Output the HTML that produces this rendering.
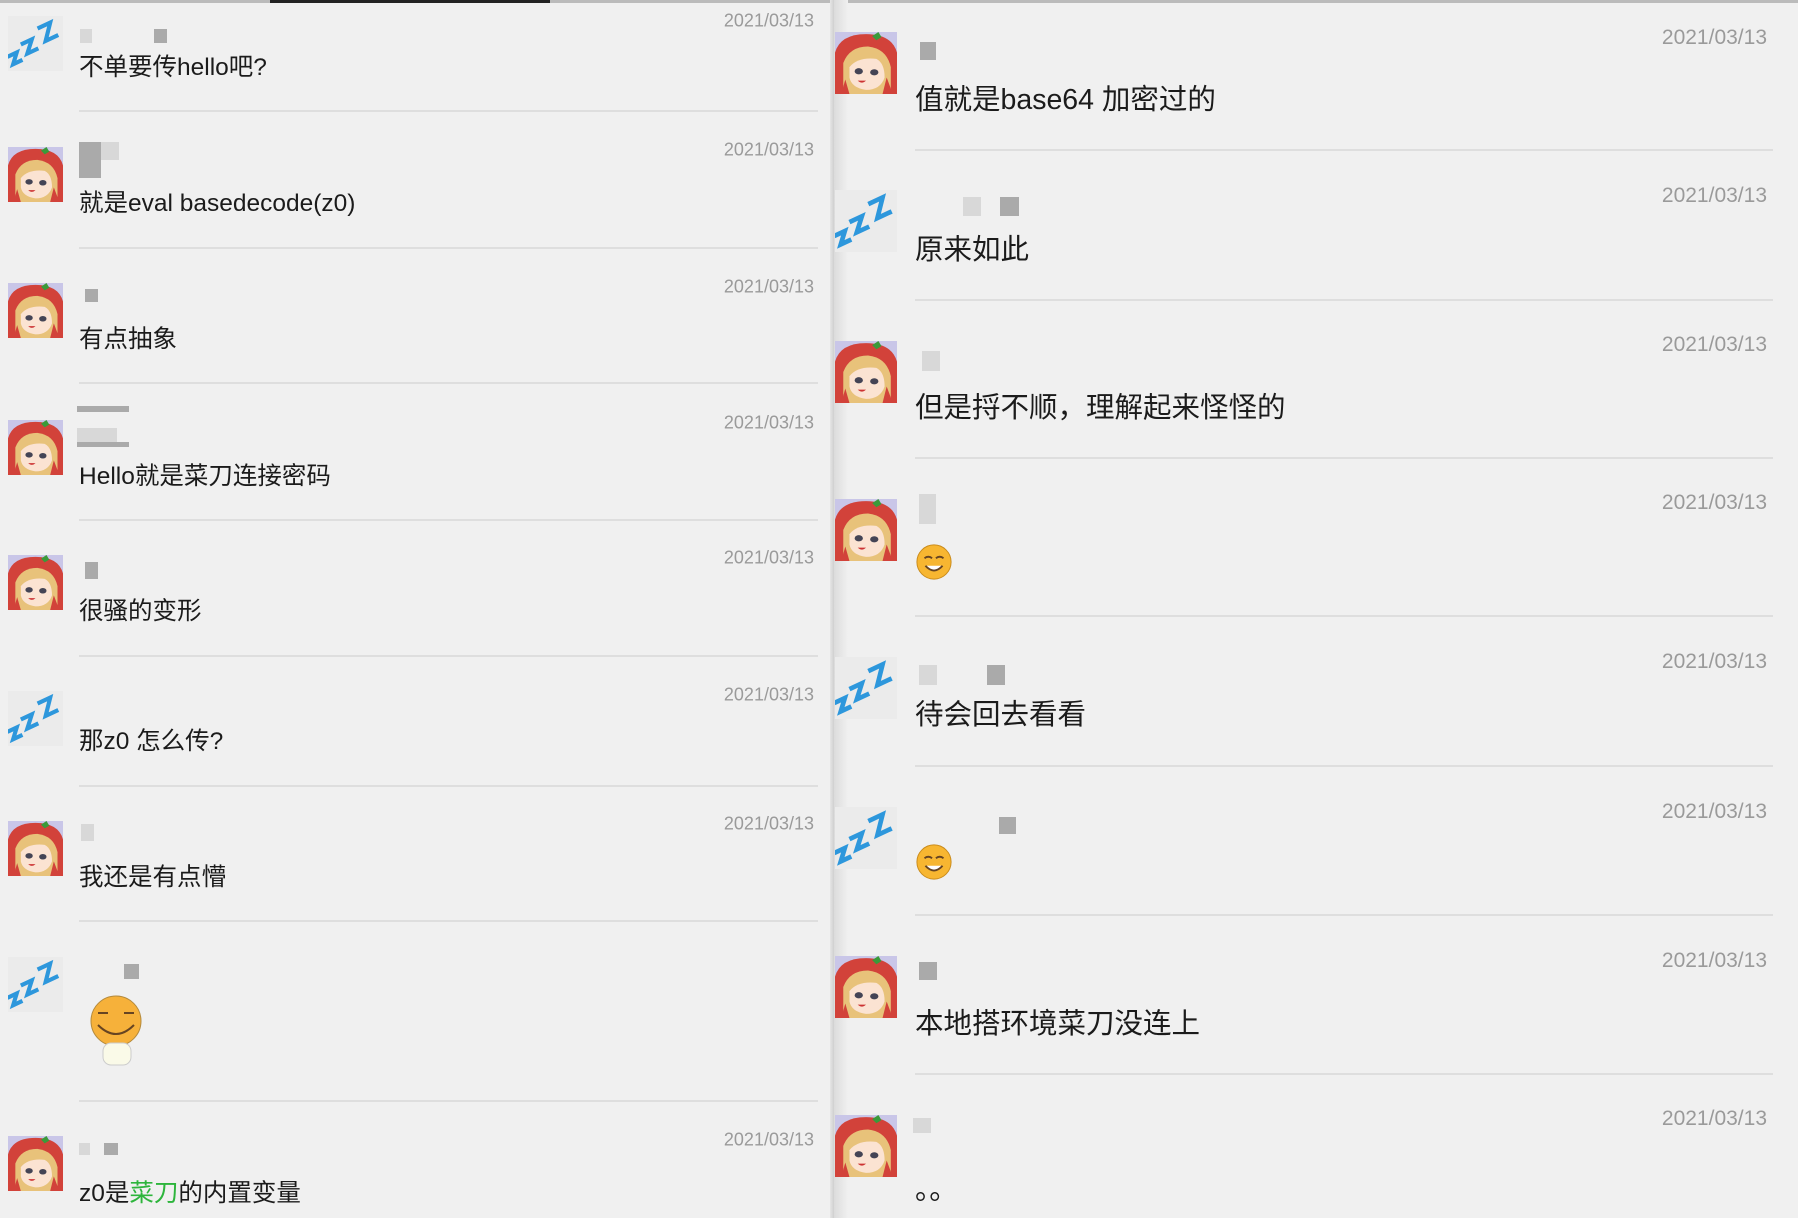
<!DOCTYPE html>
<html><head><meta charset="utf-8"><style>
*{margin:0;padding:0;box-sizing:border-box}
body{width:1798px;height:1218px;overflow:hidden;background:#f0f0f0;position:relative;font-family:"Liberation Sans","Noto Sans CJK SC",sans-serif;color:#1b1b1b}
.a{position:absolute}
.L .av{width:55px;height:55px;left:8px}
.R .av{width:62px;height:62px;left:835px}
.L .m{left:79px;font-size:24.5px;line-height:28px;transform:translateY(-50%);margin-top:1px}
.R .m{left:915px;font-size:28.5px;line-height:34px;transform:translateY(-50%);margin-top:1px}
.L .d{right:984px;font-size:18px;color:#9a9a9a;transform:translateY(-50%)}
.R .d{right:31px;font-size:21px;color:#9a9a9a;transform:translateY(-50%)}
.L .s{left:79px;width:739px;height:2px;background:#dedede}
.R .s{left:915px;width:858px;height:2px;background:#dedede}
.b{position:absolute;background:#aaa}
.c{position:absolute;background:#d8d8d8}
</style></head><body>
<svg width="0" height="0" style="position:absolute">
<defs>
<symbol id="girl" viewBox="0 0 60 60">
<rect width="60" height="60" fill="#c9c6e8"/>
<path d="M0 60V20Q5 2 30 2Q55 2 60 20V60Z" fill="#d2423a"/>
<path d="M36 4l6-4 3 5-5 3z" fill="#3a9a3a"/>
<path d="M8 60V30Q14 14 32 14Q50 16 54 34V60Z" fill="#e8c27a"/>
<path d="M14 34Q22 24 40 26Q48 30 48 44Q44 56 30 56Q16 54 14 44Z" fill="#fbe3d2"/>
<ellipse cx="23" cy="38" rx="4" ry="3" fill="#445"/>
<ellipse cx="38" cy="39" rx="4" ry="3" fill="#445"/>
<path d="M22 47q4 4 8 0z" fill="#c33"/>
<path d="M6 60l4-14 4 14zM46 60l4-16 6 16z" fill="#d2423a"/>
</symbol>
<symbol id="zzz" viewBox="0 0 60 60">
<rect width="60" height="60" fill="#ebebeb"/>
<g fill="none" stroke="#2d97dc" stroke-width="4.5" stroke-linejoin="miter" stroke-linecap="square">
<path transform="rotate(-25 8 46)" d="M3 41h9l-9 10h9"/>
<path transform="rotate(-25 24 33)" d="M18 27h11l-11 12h11"/>
<path transform="rotate(-25 44 17)" d="M37 9h13l-13 16h13"/>
</g>
</symbol>
<symbol id="emo" viewBox="0 0 40 40">
<circle cx="20" cy="20" r="18" fill="#f7b631" stroke="#c98a1a"/>
<path d="M10 16q4-3 8 0M22 16q4-3 8 0" stroke="#642" stroke-width="2" fill="none"/>
<path d="M11 24q9 10 18 0" stroke="#642" stroke-width="2" fill="#fff"/>
</symbol>
</defs></svg>

<div class="a" style="left:0;top:0;width:1798px;height:3px;background:#bbb"></div>
<div class="a" style="left:270px;top:0;width:280px;height:3px;background:#222"></div>

<div class="L">
<svg class="a av" style="top:16px"><use href="#zzz"/></svg>
<div class="c" style="left:80px;top:29px;width:12px;height:14px"></div><div class="b" style="left:154px;top:29px;width:13px;height:14px"></div>
<div class="a m" style="top:67px">不单要传hello吧?</div>
<div class="a d" style="top:21px">2021/03/13</div>
<div class="a s" style="top:110px"></div>

<svg class="a av" style="top:147px"><use href="#girl"/></svg>
<div class="b" style="left:79px;top:142px;width:22px;height:36px"></div><div class="c" style="left:101px;top:142px;width:18px;height:18px"></div>
<div class="a m" style="top:203px">就是eval basedecode(z0)</div>
<div class="a d" style="top:150px">2021/03/13</div>
<div class="a s" style="top:247px"></div>

<svg class="a av" style="top:283px"><use href="#girl"/></svg>
<div class="b" style="left:85px;top:289px;width:13px;height:13px"></div>
<div class="a m" style="top:339px">有点抽象</div>
<div class="a d" style="top:287px">2021/03/13</div>
<div class="a s" style="top:382px"></div>

<svg class="a av" style="top:420px"><use href="#girl"/></svg>
<div class="b" style="left:77px;top:406px;width:52px;height:6px"></div><div class="c" style="left:77px;top:428px;width:40px;height:14px"></div><div class="b" style="left:77px;top:442px;width:52px;height:5px"></div>
<div class="a m" style="top:476px">Hello就是菜刀连接密码</div>
<div class="a d" style="top:423px">2021/03/13</div>
<div class="a s" style="top:519px"></div>

<svg class="a av" style="top:555px"><use href="#girl"/></svg>
<div class="b" style="left:85px;top:562px;width:13px;height:17px"></div>
<div class="a m" style="top:611px">很骚的变形</div>
<div class="a d" style="top:558px">2021/03/13</div>
<div class="a s" style="top:655px"></div>

<svg class="a av" style="top:691px"><use href="#zzz"/></svg>
<div class="a m" style="top:741px">那z0 怎么传?</div>
<div class="a d" style="top:695px">2021/03/13</div>
<div class="a s" style="top:785px"></div>

<svg class="a av" style="top:821px"><use href="#girl"/></svg>
<div class="c" style="left:81px;top:824px;width:13px;height:17px"></div>
<div class="a m" style="top:877px">我还是有点懵</div>
<div class="a d" style="top:824px">2021/03/13</div>
<div class="a s" style="top:920px"></div>

<svg class="a av" style="top:957px"><use href="#zzz"/></svg>
<div class="b" style="left:124px;top:964px;width:15px;height:15px"></div>
<svg class="a" style="left:86px;top:995px;width:60px;height:72px" viewBox="0 0 60 72"><circle cx="30" cy="26" r="25" fill="#f6b13a" stroke="#b48a3c"/><path d="M12 30q18 18 36 0" stroke="#642" stroke-width="2" fill="none"/><path d="M12 18h10M38 18h10" stroke="#642" stroke-width="2"/><rect x="17" y="48" width="28" height="22" rx="8" fill="#fafae8" stroke="#ccc"/></svg>
<div class="a s" style="top:1100px"></div>

<svg class="a av" style="top:1136px"><use href="#girl"/></svg>
<div class="c" style="left:79px;top:1143px;width:11px;height:12px"></div><div class="b" style="left:104px;top:1143px;width:14px;height:12px"></div>
<div class="a m" style="top:1193px">z0是<span style="color:#2db53c">菜刀</span>的内置变量</div>
<div class="a d" style="top:1140px">2021/03/13</div>
</div>

<div class="a" style="left:830px;top:0;width:4px;height:1218px;background:linear-gradient(to right,#e6e6e6,#cfcfcf)"></div>
<div class="a" style="left:834px;top:0;width:14px;height:1218px;background:linear-gradient(to right,#dcdcdc,#f0f0f0)"></div>

<div class="R">
<svg class="a av" style="top:32px"><use href="#girl"/></svg>
<div class="b" style="left:920px;top:42px;width:16px;height:18px"></div>
<div class="a m" style="top:99px">值就是base64 加密过的</div>
<div class="a d" style="top:38px">2021/03/13</div>
<div class="a s" style="top:149px"></div>

<svg class="a av" style="top:190px"><use href="#zzz"/></svg>
<div class="c" style="left:963px;top:197px;width:18px;height:19px"></div><div class="b" style="left:1000px;top:197px;width:19px;height:19px"></div>
<div class="a m" style="top:249px">原来如此</div>
<div class="a d" style="top:196px">2021/03/13</div>
<div class="a s" style="top:299px"></div>

<svg class="a av" style="top:341px"><use href="#girl"/></svg>
<div class="c" style="left:922px;top:351px;width:18px;height:20px"></div>
<div class="a m" style="top:407px">但是捋不顺，理解起来怪怪的</div>
<div class="a d" style="top:345px">2021/03/13</div>
<div class="a s" style="top:457px"></div>

<svg class="a av" style="top:499px"><use href="#girl"/></svg>
<div class="c" style="left:919px;top:494px;width:17px;height:30px"></div>
<svg class="a" style="left:915px;top:543px;width:38px;height:38px"><use href="#emo"/></svg>
<div class="a d" style="top:503px">2021/03/13</div>
<div class="a s" style="top:615px"></div>

<svg class="a av" style="top:657px"><use href="#zzz"/></svg>
<div class="c" style="left:919px;top:665px;width:18px;height:20px"></div><div class="b" style="left:987px;top:665px;width:18px;height:20px"></div>
<div class="a m" style="top:714px">待会回去看看</div>
<div class="a d" style="top:662px">2021/03/13</div>
<div class="a s" style="top:765px"></div>

<svg class="a av" style="top:807px"><use href="#zzz"/></svg>
<div class="b" style="left:999px;top:817px;width:17px;height:17px"></div>
<svg class="a" style="left:915px;top:843px;width:38px;height:38px"><use href="#emo"/></svg>
<div class="a d" style="top:812px">2021/03/13</div>
<div class="a s" style="top:914px"></div>

<svg class="a av" style="top:956px"><use href="#girl"/></svg>
<div class="b" style="left:919px;top:962px;width:18px;height:18px"></div>
<div class="a m" style="top:1023px">本地搭环境菜刀没连上</div>
<div class="a d" style="top:961px">2021/03/13</div>
<div class="a s" style="top:1073px"></div>

<svg class="a av" style="top:1115px"><use href="#girl"/></svg>
<div class="c" style="left:913px;top:1118px;width:18px;height:15px"></div>
<div class="a m" style="top:1189px">。。</div>
<div class="a d" style="top:1119px">2021/03/13</div>
</div>
</body></html>
